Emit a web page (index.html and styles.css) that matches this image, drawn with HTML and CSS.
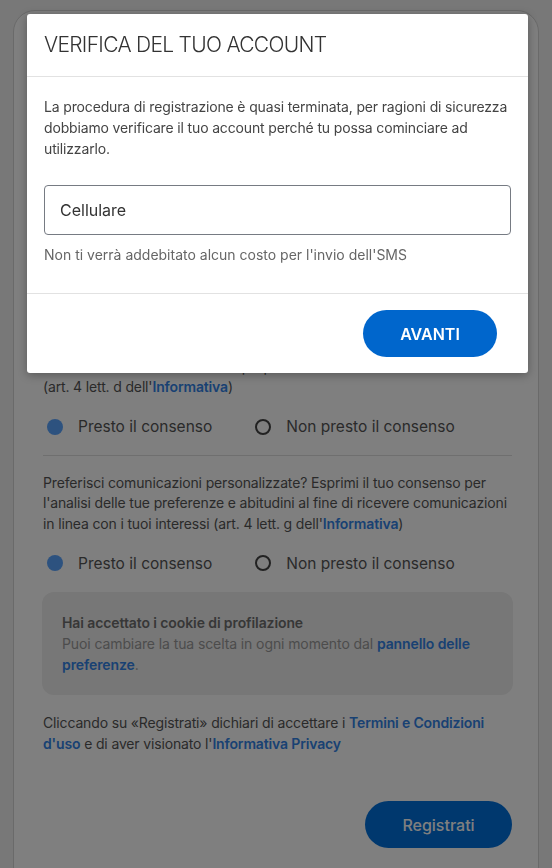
FILE: index.html
```html
<!DOCTYPE html>
<html lang="it">
<head>
    <meta charset="UTF-8">
    <meta name="viewport" content="width=device-width, initial-scale=1.0">
    <title>Registrazione</title>
    <link rel="stylesheet" href="styles.css">
</head>
<body>
    <div class="page">
        <main class="card">
            <h2 class="card-title">Crea il tuo account</h2>
            <input type="text" class="field" aria-label="Nome">
            <input type="email" class="field" aria-label="Email">
            <input type="password" class="field" aria-label="Password">

            <h3 class="section-title">Consensi</h3>
            <p class="text">Vuoi ricevere offerte e promozioni? Esprimi il tuo consenso per<br>
                ricevere le nostre newsletter e proposte commerciali<br>
                (art. 4 lett. d dell'<a href="#">Informativa</a>)</p>
            <div class="radios">
                <label class="radio"><span class="dot checked"></span>Presto il consenso</label>
                <label class="radio"><span class="dot"></span>Non presto il consenso</label>
            </div>
            <hr class="divider">

            <p class="text">Preferisci comunicazioni personalizzate? Esprimi il tuo consenso per l'analisi delle tue preferenze e abitudini al fine di ricevere comunicazioni in linea con i tuoi interessi (art. 4 lett. g dell'<a href="#">Informativa</a>)</p>
            <div class="radios">
                <label class="radio"><span class="dot checked"></span>Presto il consenso</label>
                <label class="radio"><span class="dot"></span>Non presto il consenso</label>
            </div>

            <div class="notice">
                <strong>Hai accettato i cookie di profilazione</strong>
                <p>Puoi cambiare la tua scelta in ogni momento dal <a href="#">pannello delle preferenze</a>.</p>
            </div>

            <p class="text terms">Cliccando su «Registrati» dichiari di accettare i <a href="#">Termini e Condizioni d'uso</a> e di aver visionato l'<a href="#">Informativa Privacy</a></p>

            <div class="actions">
                <button class="btn-register">Registrati</button>
            </div>
        </main>
    </div>

    <div class="overlay"></div>

    <div class="modal">
        <div class="modal-header">
            <h1>VERIFICA DEL TUO ACCOUNT</h1>
        </div>
        <div class="modal-body">
            <p class="intro">La procedura di registrazione è quasi terminata, per ragioni di sicurezza dobbiamo verificare il tuo account perché tu possa cominciare ad utilizzarlo.</p>
            <input type="tel" class="phone" placeholder="Cellulare">
            <p class="hint">Non ti verrà addebitato alcun costo per l'invio dell'SMS</p>
        </div>
        <div class="modal-footer">
            <button class="btn-next">AVANTI</button>
        </div>
    </div>
</body>
</html>
```

FILE: styles.css
```css
body {
    font-family: Inter, 'Noto Sans', sans-serif;
    background-color: #f0f0f0;
    margin: 0;
    color: #555;
}
.page {
    padding: 10px 13px 0;
}
.card {
    background: white;
    border: 1px solid #d4d4d4;
    border-radius: 22px;
    padding: 24px 26px 40px 29px;
}
.card-title {
    margin: 0 0 20px;
    font-size: 22px;
    line-height: 30px;
    font-weight: 600;
    color: #333;
}
.field {
    display: block;
    box-sizing: border-box;
    width: 100%;
    height: 50px;
    margin: 0 0 16px;
    border: 1px solid #767b83;
    border-radius: 4px;
}
.section-title {
    margin: 25px 0 20px;
    font-size: 18px;
    line-height: 24px;
    font-weight: 600;
    color: #333;
}
.text {
    margin: 0;
    font-size: 14px;
    line-height: 20.5px;
    letter-spacing: -0.15px;
    color: #555;
}
a {
    color: #3283e6;
    font-weight: 600;
    text-decoration: none;
}
.radios {
    display: flex;
    gap: 43px;
    margin: 17px 0 0 4px;
    height: 24px;
    align-items: center;
}
.radio {
    display: flex;
    align-items: center;
    gap: 15px;
    font-size: 15.5px;
    color: #555;
}
.dot {
    width: 12px;
    height: 12px;
    border: 2px solid #444;
    border-radius: 50%;
}
.dot.checked {
    width: 16px;
    height: 16px;
    border: none;
    background: #5aa4ff;
}
.divider {
    border: none;
    border-top: 1px solid #dedede;
    margin: 16px 0 17px;
}
.notice {
    margin: 17px -1px 0 -1px;
    padding: 20px 20px 20px;
    background: #eeeeee;
    border-radius: 12px;
    font-size: 14px;
    line-height: 21px;
    letter-spacing: -0.1px;
    color: #999;
}
.notice strong {
    display: block;
    font-weight: 600;
    color: #6e6e6e;
}
.notice p {
    margin: 0;
}
.terms {
    margin-top: 18px;
}
.actions {
    display: flex;
    justify-content: flex-end;
    margin-top: 47px;
}
.btn-register {
    width: 147px;
    height: 47px;
    border: none;
    border-radius: 24px;
    background: #0070dc;
    color: white;
    font-family: inherit;
    font-size: 16px;
    font-weight: 500;
}
.overlay {
    position: fixed;
    inset: 0;
    background: rgba(0, 0, 0, 0.5);
}
.modal {
    position: fixed;
    top: 14px;
    left: 27px;
    width: 501px;
    background: white;
    border-radius: 3px;
    box-shadow: 0 2px 10px rgba(0, 0, 0, 0.3);
}
.modal-header {
    padding: 16px 17px;
    border-bottom: 1px solid #e2e2e2;
}
.modal-header h1 {
    margin: 0;
    font-size: 21px;
    line-height: 30px;
    font-weight: 300;
    letter-spacing: -0.7px;
    color: #333;
}
.modal-body {
    padding: 19px 17px 28px;
}
.modal-body p {
    margin: 0;
    font-size: 14px;
    line-height: 21px;
    color: #444;
}
.modal-body .intro {
    letter-spacing: -0.15px;
}
.phone {
    display: block;
    box-sizing: border-box;
    width: 100%;
    height: 50px;
    margin: 26px 0 9px;
    padding: 0 15px;
    border: 1px solid #767b83;
    border-radius: 4px;
    font-family: inherit;
    font-size: 16px;
    color: #333;
}
.phone::placeholder {
    color: #333;
}
.modal-body .hint {
    color: #666;
}
.modal-footer {
    display: flex;
    justify-content: flex-end;
    padding: 16px 31px 16px 17px;
    border-top: 1px solid #e2e2e2;
}
.btn-next {
    width: 134px;
    height: 47px;
    border: none;
    border-radius: 24px;
    background: #0066cc;
    color: white;
    font-family: inherit;
    font-size: 16px;
    font-weight: 600;
}
```
